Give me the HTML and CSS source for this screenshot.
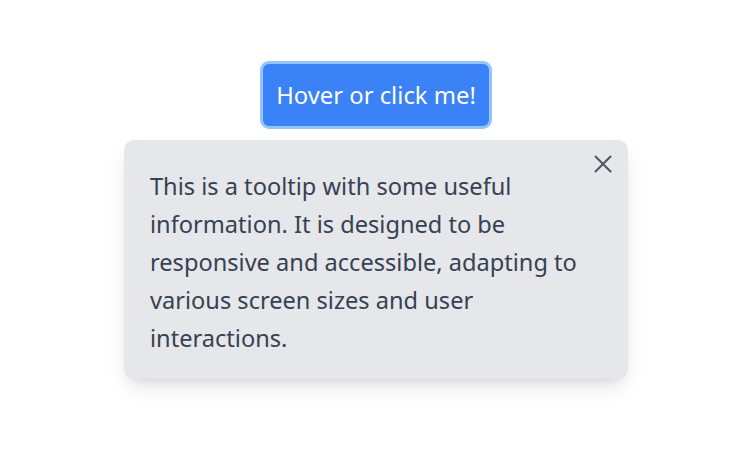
FILE: index.html
```html
<!DOCTYPE html>
<html>
<head>
<meta charset="utf-8">
<link rel="stylesheet" href="styles.css">
</head>
<body>
<div class="page">
  <button class="trigger">Hover or click me!</button>
  <div class="tooltip">
    <p class="tip-text">This is a tooltip with some useful information. It is designed to be responsive and accessible, adapting to various screen sizes and user interactions.</p>
    <button class="close" aria-label="Close">
      <svg width="18" height="18" viewBox="0 0 18 18"><path d="M1.5 1.5 L16.5 16.5 M16.5 1.5 L1.5 16.5" stroke="#4b5563" stroke-width="2" stroke-linecap="round" fill="none"/></svg>
    </button>
  </div>
</div>
</body>
</html>
```
FILE: styles.css
```css
html, body {
  margin: 0;
  padding: 0;
  background: #ffffff;
}
body {
  font-family: "Noto Sans", "Open Sans", sans-serif;
}
.page {
  width: 750px;
  height: 469px;
  display: flex;
  flex-direction: column;
  align-items: center;
  padding-top: 61px;
  box-sizing: border-box;
}
.trigger {
  width: 232px;
  height: 68px;
  margin-left: 2px;
  background: #3b82f6;
  color: #ffffff;
  font-family: inherit;
  font-size: 23.8px;
  border: 3px solid #93c5fd;
  border-radius: 9px;
  cursor: pointer;
  padding: 0;
}
.tooltip {
  position: relative;
  margin-top: 11px;
  margin-left: 2px;
  width: 504px;
  height: 239px;
  box-sizing: border-box;
  background: #e5e7eb;
  border-radius: 10px;
  box-shadow: 0 10px 25px -5px rgba(0,0,0,0.12), 0 8px 10px -6px rgba(0,0,0,0.08);
  padding: 27px 40px 22px 26px;
}
.tip-text {
  margin: 0;
  font-size: 23.6px;
  line-height: 38px;
  color: #374151;
}
.close {
  position: absolute;
  top: 15px;
  right: 16px;
  background: none;
  border: none;
  padding: 0;
  width: 18px;
  height: 18px;
  cursor: pointer;
}
.close svg { display: block; }
```
